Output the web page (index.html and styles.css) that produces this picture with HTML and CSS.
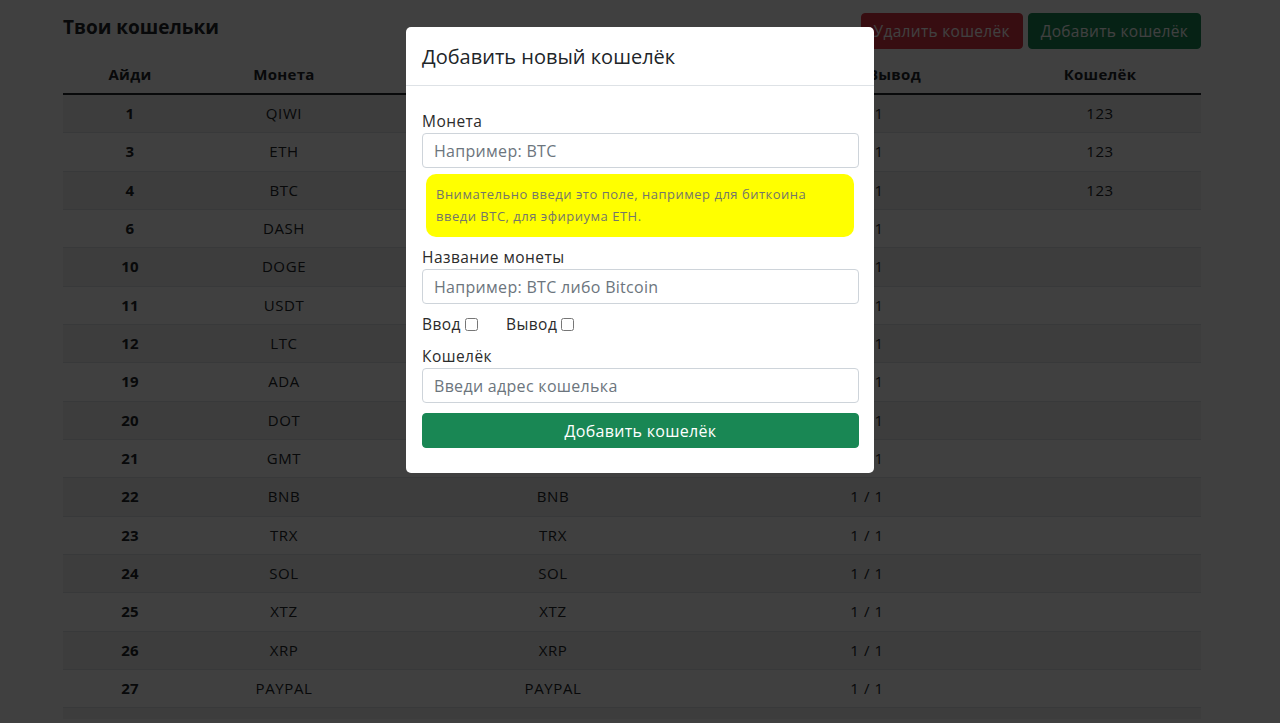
FILE: index.html
```html
<!DOCTYPE html>
<html lang="ru">
<head>
<meta charset="utf-8">
<title>Твои кошельки</title>
<link rel="stylesheet" href="styles.css">
</head>
<body>
<div class="page">
  <div class="topbar">
    <h5 class="title">Твои кошельки</h5>
    <div class="actions">
      <button class="btn btn-danger">Удалить кошелёк</button>
      <button class="btn btn-success">Добавить кошелёк</button>
    </div>
  </div>
  <table class="wallets">
    <colgroup>
      <col class="c1"><col class="c2"><col class="c3"><col class="c4"><col class="c5">
    </colgroup>
    <thead>
      <tr><th>Айди</th><th>Монета</th><th>Название</th><th>Ввод / Вывод</th><th>Кошелёк</th></tr>
    </thead>
    <tbody>
      <tr><td class="id">1</td><td>QIWI</td><td>QIWI</td><td>1 / 1</td><td>123</td></tr>
      <tr><td class="id">3</td><td>ETH</td><td>ETH</td><td>1 / 1</td><td>123</td></tr>
      <tr><td class="id">4</td><td>BTC</td><td>BTC</td><td>1 / 1</td><td>123</td></tr>
      <tr><td class="id">6</td><td>DASH</td><td>DASH</td><td>1 / 1</td><td></td></tr>
      <tr><td class="id">10</td><td>DOGE</td><td>DOGE</td><td>1 / 1</td><td></td></tr>
      <tr><td class="id">11</td><td>USDT</td><td>USDT</td><td>1 / 1</td><td></td></tr>
      <tr><td class="id">12</td><td>LTC</td><td>LTC</td><td>1 / 1</td><td></td></tr>
      <tr><td class="id">19</td><td>ADA</td><td>ADA</td><td>1 / 1</td><td></td></tr>
      <tr><td class="id">20</td><td>DOT</td><td>DOT</td><td>1 / 1</td><td></td></tr>
      <tr><td class="id">21</td><td>GMT</td><td>GMT</td><td>1 / 1</td><td></td></tr>
      <tr><td class="id">22</td><td>BNB</td><td>BNB</td><td>1 / 1</td><td></td></tr>
      <tr><td class="id">23</td><td>TRX</td><td>TRX</td><td>1 / 1</td><td></td></tr>
      <tr><td class="id">24</td><td>SOL</td><td>SOL</td><td>1 / 1</td><td></td></tr>
      <tr><td class="id">25</td><td>XTZ</td><td>XTZ</td><td>1 / 1</td><td></td></tr>
      <tr><td class="id">26</td><td>XRP</td><td>XRP</td><td>1 / 1</td><td></td></tr>
      <tr><td class="id">27</td><td>PAYPAL</td><td>PAYPAL</td><td>1 / 1</td><td></td></tr>
      <tr class="spacer"><td></td><td></td><td></td><td></td><td></td></tr>
    </tbody>
  </table>
</div>

<div class="backdrop"></div>
<div class="modal-wrap">
  <div class="modal">
    <div class="modal-header">
      <h5 class="modal-title">Добавить новый кошелёк</h5>
    </div>
    <div class="modal-body">
      <label class="form-label">Монета</label>
      <input class="form-control" type="text" placeholder="Например: BTC">
      <div class="hint">Внимательно введи это поле, например для биткоина введи BTC, для эфириума ETH.</div>
      <label class="form-label">Название монеты</label>
      <input class="form-control" type="text" placeholder="Например: BTC либо Bitcoin">
      <div class="checks">
        <label class="check">Ввод <input type="checkbox"></label>
        <label class="check">Вывод <input type="checkbox"></label>
      </div>
      <label class="form-label">Кошелёк</label>
      <input class="form-control" type="text" placeholder="Введи адрес кошелька">
      <button class="btn btn-success btn-block">Добавить кошелёк</button>
    </div>
  </div>
</div>
</body>
</html>
```
FILE: styles.css
```css
* { box-sizing: border-box; }
html, body {
  margin: 0;
  padding: 0;
  background: #fff;
  color: #212529;
  font-family: "Open Sans", "Noto Sans", sans-serif;
  overflow: hidden;
  height: 100%;
}
.page {
  width: 1138px;
  margin-left: 63px;
  padding-top: 13px;
}
.topbar {
  display: flex;
  justify-content: space-between;
  align-items: center;
  height: 36px;
  margin-bottom: 7px;
}
.title {
  margin: 0;
  font-size: 19px;
  font-weight: 700;
  position: relative;
  top: -4px;
}
.actions { display: flex; gap: 5px; }
.btn {
  font-family: inherit;
  font-size: 15.5px;
  letter-spacing: 0.3px;
  border: 1px solid transparent;
  border-radius: 4px;
  height: 36px;
  padding: 0 12px;
  color: #fff;
  cursor: pointer;
}
.btn-danger { background: #dc3545; border-color: #dc3545; }
.btn-success { background: #198754; border-color: #198754; }

.wallets {
  width: 100%;
  border-collapse: collapse;
  font-size: 15px;
  text-align: center;
}
.c1 { width: 134px; }
.c2 { width: 174px; }
.c3 { width: 364px; }
.c4 { width: 264px; }
.c5 { width: 202px; }
.wallets th {
  font-weight: 700;
  padding: 8px;
  line-height: 21px;
  letter-spacing: 0.3px;
  border-bottom: 2px solid #212529;
}
.wallets td {
  padding: 8px;
  line-height: 21.33px;
  letter-spacing: 0.6px;
  border-bottom: 1px solid #dee2e6;
}
.wallets tbody tr:nth-child(odd) td { background: rgba(0,0,0,0.05); }
.wallets td.id { font-weight: 700; letter-spacing: 0.2px; }
.wallets tr.spacer td { height: 11px; padding: 0; line-height: 0; border: 0; }

.backdrop {
  position: fixed;
  inset: 0;
  background: rgba(0,0,0,0.75);
}
.modal-wrap {
  position: fixed;
  inset: 0;
  display: flex;
  justify-content: center;
  align-items: flex-start;
  padding-top: 27px;
}
.modal {
  width: 468px;
  background: #fff;
  border-radius: 5px;
}
.modal-header {
  height: 59px;
  padding: 0 16px;
  display: flex;
  align-items: center;
  border-bottom: 1px solid #dee2e6;
}
.modal-title {
  margin: 0;
  font-size: 20px;
  font-weight: 400;
  color: #212529;
}
.modal-body {
  padding: 24px 15px 25px 16px;
  display: flex;
  flex-direction: column;
}
.form-label {
  font-size: 15.5px;
  letter-spacing: 0.45px;
  line-height: 22px;
  color: #2b2b2b;
  margin-bottom: 1px;
}
.form-control {
  height: 35px;
  border: 1px solid #ced4da;
  border-radius: 4px;
  padding: 0 11px;
  font-family: inherit;
  font-size: 16px;
  letter-spacing: 0.3px;
  color: #212529;
}
.form-control::placeholder { color: #6c757d; }
.hint {
  margin: 6px 5px 9px 4px;
  background: #ffff00;
  border-radius: 10px;
  padding: 9px 10px 10px 10px;
  font-size: 13px;
  letter-spacing: 0.5px;
  line-height: 22px;
  color: #74766a;
}
.checks {
  display: flex;
  gap: 28px;
  margin: 9px 0 10px;
  height: 22px;
  align-items: center;
}
.check {
  display: flex;
  align-items: center;
  gap: 4px;
  font-size: 15.5px;
  letter-spacing: 0.45px;
  color: #2b2b2b;
}
.check input {
  margin: 0;
  width: 13px;
  height: 13px;
}
.form-control + .btn-block { margin-top: 10px; }
.btn-block {
  height: 35px;
  width: 100%;
  font-weight: 500;
  font-size: 16px;
  letter-spacing: 0.3px;
}
```
